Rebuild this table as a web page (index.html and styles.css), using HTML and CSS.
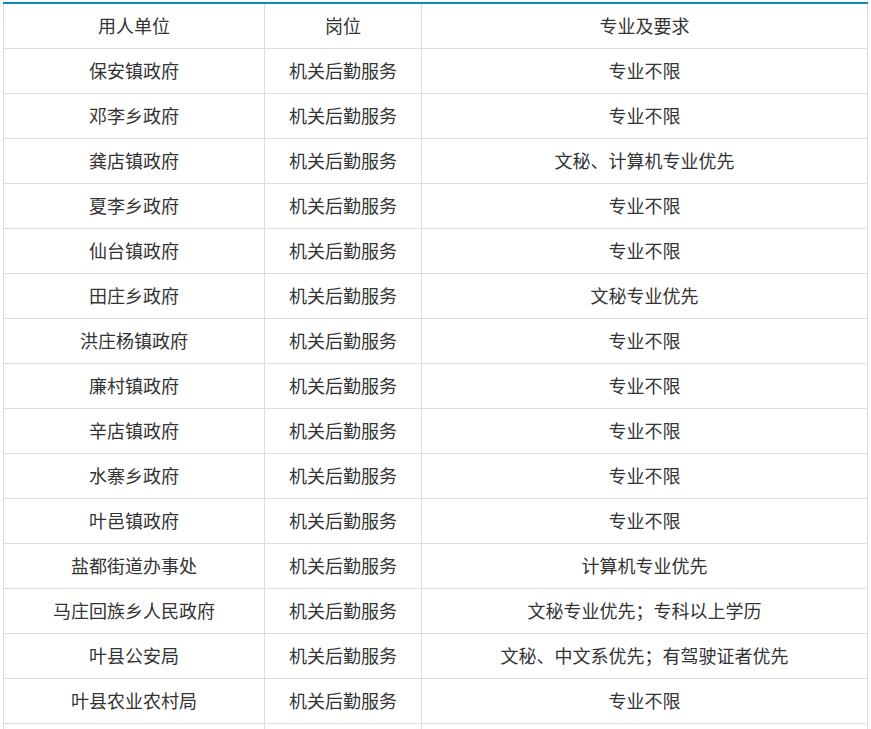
FILE: index.html
```html
<!DOCTYPE html>
<html lang="zh">
<head>
<meta charset="utf-8">
<link rel="stylesheet" href="styles.css">
</head>
<body>
<table class="jobs">
<colgroup><col class="c1"><col class="c2"><col class="c3"></colgroup>
<tr><td>用人单位</td><td>岗位</td><td>专业及要求</td></tr>
<tr><td>保安镇政府</td><td>机关后勤服务</td><td>专业不限</td></tr>
<tr><td>邓李乡政府</td><td>机关后勤服务</td><td>专业不限</td></tr>
<tr><td>龚店镇政府</td><td>机关后勤服务</td><td>文秘、计算机专业优先</td></tr>
<tr><td>夏李乡政府</td><td>机关后勤服务</td><td>专业不限</td></tr>
<tr><td>仙台镇政府</td><td>机关后勤服务</td><td>专业不限</td></tr>
<tr><td>田庄乡政府</td><td>机关后勤服务</td><td>文秘专业优先</td></tr>
<tr><td>洪庄杨镇政府</td><td>机关后勤服务</td><td>专业不限</td></tr>
<tr><td>廉村镇政府</td><td>机关后勤服务</td><td>专业不限</td></tr>
<tr><td>辛店镇政府</td><td>机关后勤服务</td><td>专业不限</td></tr>
<tr><td>水寨乡政府</td><td>机关后勤服务</td><td>专业不限</td></tr>
<tr><td>叶邑镇政府</td><td>机关后勤服务</td><td>专业不限</td></tr>
<tr><td>盐都街道办事处</td><td>机关后勤服务</td><td>计算机专业优先</td></tr>
<tr><td>马庄回族乡人民政府</td><td>机关后勤服务</td><td>文秘专业优先；专科以上学历</td></tr>
<tr><td>叶县公安局</td><td>机关后勤服务</td><td>文秘、中文系优先；有驾驶证者优先</td></tr>
<tr><td>叶县农业农村局</td><td>机关后勤服务</td><td>专业不限</td></tr>
<tr><td>&nbsp;</td><td>&nbsp;</td><td>&nbsp;</td></tr>
</table>
</body>
</html>
```
FILE: styles.css
```css
html, body {
  margin: 0;
  padding: 0;
  background: #fff;
}
body {
  padding: 2px 4px 0 3px;
  font-family: "Noto Sans CJK SC", "Microsoft YaHei", sans-serif;
  color: #333;
}
.jobs {
  width: 864px;
  border-collapse: collapse;
  table-layout: fixed;
  border-top: 2px solid #0a8bc4;
}
.c1 { width: 261px; }
.c2 { width: 157px; }
.c3 { width: 446px; }
.jobs td {
  border: 1px solid #dcdcdc;
  height: 42px;
  padding: 0 0 2px;
  text-align: center;
  vertical-align: middle;
  font-size: 18px;
  line-height: 24px;
}
.jobs tr:first-child td {
  border-top: none;
}
```
